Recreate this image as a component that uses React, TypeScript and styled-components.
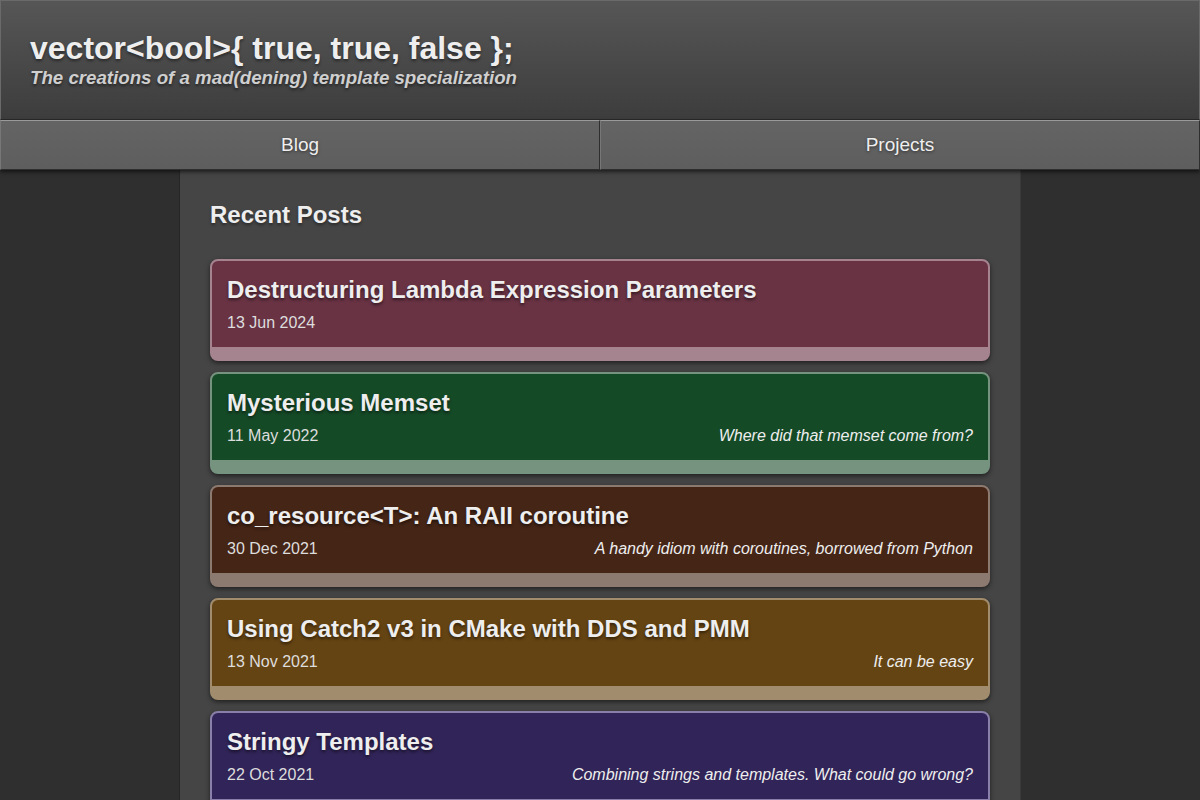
import React from 'react'
import styled, { createGlobalStyle } from 'styled-components'

type Post = {
  title: string
  date: string
  blurb?: string
  body: string
  edge: string
}

const posts: Post[] = [
  { title: 'Destructuring Lambda Expression Parameters', date: '13 Jun 2024', body: '#693344', edge: '#a6848f' },
  {
    title: 'Mysterious Memset',
    date: '11 May 2022',
    blurb: 'Where did that memset come from?',
    body: '#154a27',
    edge: '#76937f',
  },
  {
    title: 'co_resource<T>: An RAII coroutine',
    date: '30 Dec 2021',
    blurb: 'A handy idiom with coroutines, borrowed from Python',
    body: '#452516',
    edge: '#8c7a70',
  },
  {
    title: 'Using Catch2 v3 in CMake with DDS and PMM',
    date: '13 Nov 2021',
    blurb: 'It can be easy',
    body: '#654413',
    edge: '#a18d6e',
  },
  {
    title: 'Stringy Templates',
    date: '22 Oct 2021',
    blurb: 'Combining strings and templates. What could go wrong?',
    body: '#312458',
    edge: '#8a7fa8',
  },
]

export default function App() {
  return (
    <>
      <GlobalStyle />
      <Header_Bar>
        <Site_Title>vector&lt;bool&gt;{'{'} true, true, false {'}'};</Site_Title>
        <Site_Tagline>The creations of a mad(dening) template specialization</Site_Tagline>
      </Header_Bar>
      <Nav_Bar>
        <Nav_Item href='#'>Blog</Nav_Item>
        <Nav_Item href='#'>Projects</Nav_Item>
      </Nav_Bar>
      <Main_Column>
        <Section_Title>Recent Posts</Section_Title>
        <Post_List>
          {posts.map(p => (
            <Post_Card key={p.title} $edge={p.edge}>
              <Post_Body $bg={p.body}>
                <Post_Title>{p.title}</Post_Title>
                <Post_Meta>
                  <span>{p.date}</span>
                  {p.blurb && <Post_Blurb>{p.blurb}</Post_Blurb>}
                </Post_Meta>
              </Post_Body>
              <Post_Foot />
            </Post_Card>
          ))}
        </Post_List>
      </Main_Column>
    </>
  )
}

const GlobalStyle = createGlobalStyle`
  html, body {
    margin: 0;
    background: #2f2f2f;
    color: #eee;
    font-family: "Liberation Sans", Arial, sans-serif;
  }
`

const Header_Bar = styled.header`
  height: 120px;
  box-sizing: border-box;
  padding: 30px 29px 0;
  border: 1px solid #6a6a6a;
  border-bottom-color: #2a2a2a;
  background: linear-gradient(to bottom, #565656, #3d3d3d);
`

const Site_Title = styled.h1`
  margin: 0;
  font-size: 32px;
  line-height: 34px;
  font-weight: bold;
  color: #eee;
  text-shadow: 0 2px 3px rgba(0, 0, 0, 0.45);
`

const Site_Tagline = styled.div`
  font-size: 18.7px;
  line-height: 26px;
  font-weight: bold;
  font-style: italic;
  color: #cfcfcf;
  text-shadow: 0 2px 3px rgba(0, 0, 0, 0.5);
`

const Nav_Bar = styled.nav`
  display: grid;
  grid-template-columns: 1fr 1fr;
  height: 50px;
  position: relative;
  z-index: 1;
  box-shadow: 0 2px 4px rgba(0, 0, 0, 0.6);
`

const Nav_Item = styled.a`
  display: flex;
  align-items: center;
  justify-content: center;
  box-sizing: border-box;
  border: 1px solid #2e2e2e;
  border-top-color: #9a9a9a;
  border-left-color: #777;
  background: linear-gradient(to bottom, #646464, #5e5e5e);
  color: #eee;
  text-decoration: none;
  font-size: 19px;
  text-shadow: 0 1px 3px rgba(0, 0, 0, 0.5);
`

const Main_Column = styled.main`
  width: 840px;
  box-sizing: border-box;
  margin: 0 auto;
  padding: 30px 30px 30px;
  min-height: 630px;
  background: #454545;
  box-shadow: -1px 0 0 #262626, 1px 0 0 #3a3a3a;
`

const Section_Title = styled.h2`
  margin: 0 0 29px;
  font-size: 24px;
  line-height: 30px;
  font-weight: bold;
  color: #eee;
  text-shadow: 0 2px 3px rgba(0, 0, 0, 0.4);
`

const Post_List = styled.div`
  display: flex;
  flex-direction: column;
  gap: 11px;
`

const Post_Card = styled.article<{ $edge: string }>`
  border: 2px solid ${p => p.$edge};
  border-radius: 8px;
  background: ${p => p.$edge};
  overflow: hidden;
  box-shadow: 0 2px 5px rgba(0, 0, 0, 0.55);
`

const Post_Body = styled.div<{ $bg: string }>`
  background: ${p => p.$bg};
  padding: 14px 15px 14px;
`

const Post_Title = styled.h3`
  margin: 0 0 9px;
  font-size: 24px;
  line-height: 29px;
  font-weight: bold;
  color: #eee;
  text-shadow: 0 2px 3px rgba(0, 0, 0, 0.5);
`

const Post_Meta = styled.div`
  display: flex;
  justify-content: space-between;
  font-size: 16px;
  line-height: 20px;
  color: #ddd;
`

const Post_Blurb = styled.span`
  font-style: italic;
  color: #eee;
`

const Post_Foot = styled.div`
  height: 12px;
`
